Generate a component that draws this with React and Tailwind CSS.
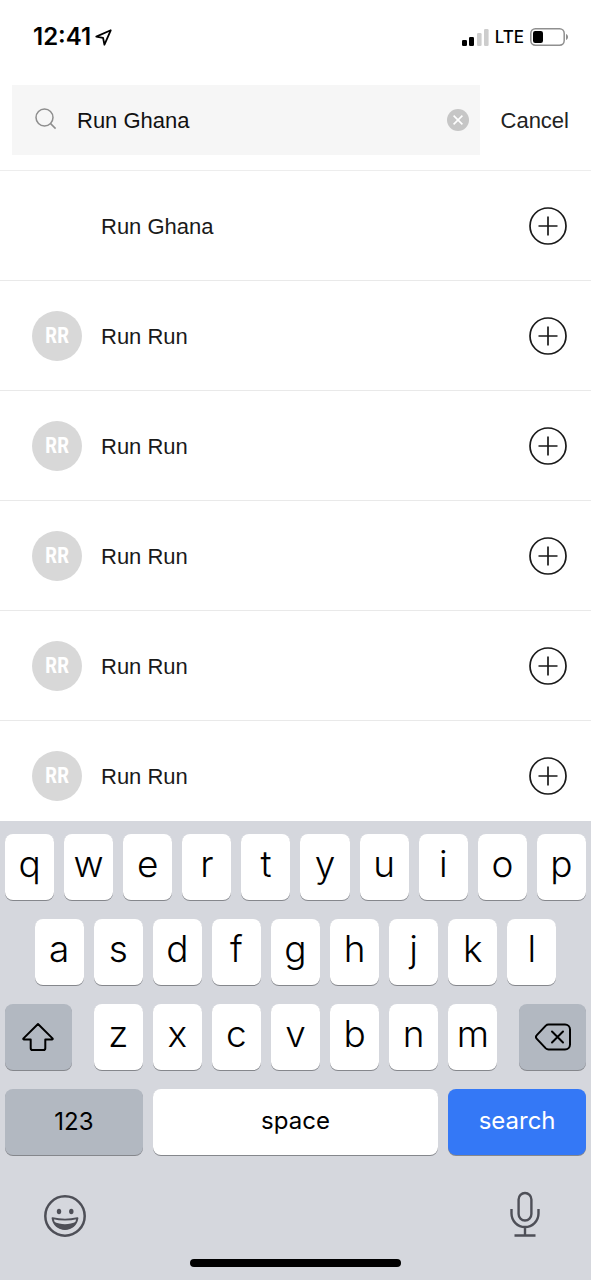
import { useState } from "react";
import clsx from "clsx";

const RESULTS = [
  { id: 1, name: "Run Ghana", initials: null },
  { id: 2, name: "Run Run", initials: "RR" },
  { id: 3, name: "Run Run", initials: "RR" },
  { id: 4, name: "Run Run", initials: "RR" },
  { id: 5, name: "Run Run", initials: "RR" },
  { id: 6, name: "Run Run", initials: "RR" },
];

function StatusBar() {
  return (
    <div className="flex h-[85px] items-start justify-between pt-6 pr-[22px] pl-[33px] font-[Inter,sans-serif] text-black">
      <div className="flex items-center gap-1">
        <span className="text-[24px] leading-[26px] font-semibold">12:41</span>
        <svg className="h-[17px] w-[17px]" viewBox="0 0 16 16" fill="none" stroke="currentColor" strokeWidth="1.7" strokeLinejoin="round">
          <path d="M14.8 1.2 1.2 7.2l6.4 1.2 1.3 6.4z" />
        </svg>
      </div>
      <div className="flex h-[26px] items-center gap-[6px]">
        <svg className="h-[17px] w-[27px]" viewBox="0 0 27 17">
          <rect x="0" y="11" width="5" height="6" rx="1.2" fill="#000" />
          <rect x="7" y="8" width="5" height="9" rx="1.2" fill="#000" />
          <rect x="15" y="4" width="4.6" height="13" rx="1.2" fill="#cdcdcd" />
          <rect x="22" y="0" width="4.6" height="17" rx="1.2" fill="#cdcdcd" />
        </svg>
        <span className="text-[17px] leading-[26px] font-medium">LTE</span>
        <svg className="h-[18px] w-[39px]" viewBox="0 0 39 18">
          <rect x="0.8" y="0.8" width="33.4" height="16.4" rx="4.6" fill="none" stroke="#8f8f8f" strokeWidth="1.5" />
          <rect x="3" y="3" width="10" height="12" rx="2.2" fill="#000" />
          <path d="M36 6v6c1.4-.5 2-1.6 2-3s-.6-2.5-2-3z" fill="#8f8f8f" />
        </svg>
      </div>
    </div>
  );
}

function SearchHeader({ query, onChange }) {
  return (
    <form
      className="flex items-center gap-[21px] border-b border-[#ededed] pr-[22px] pb-[15px] pl-3"
      onSubmit={(e) => e.preventDefault()}
    >
      <div className="flex h-[70px] min-w-0 flex-1 items-center bg-[#f6f6f6] pr-[11px] pl-[23px]">
        <svg className="mb-0.5 h-[22px] w-[22px] shrink-0" viewBox="0 0 22 22" fill="none" stroke="#8e8e8e" strokeWidth="1.5">
          <circle cx="9.5" cy="9.5" r="8.5" />
          <path d="m15.6 15.6 5 5" />
        </svg>
        <input
          type="text"
          aria-label="Search"
          value={query}
          onChange={(e) => onChange(e.target.value)}
          className="ml-5 min-w-0 flex-1 bg-transparent pt-0.5 text-[22px] leading-7 text-[#111] outline-none"
        />
        <button type="button" aria-label="Clear" onClick={() => onChange("")} className="shrink-0">
          <svg className="h-[22px] w-[22px]" viewBox="0 0 22 22">
            <circle cx="11" cy="11" r="11" fill="#c6c6c6" />
            <path d="m6.6 6.6 8.8 8.8m0-8.8-8.8 8.8" stroke="#fff" strokeWidth="1.6" />
          </svg>
        </button>
      </div>
      <button type="button" className="pt-0.5 text-[22px] leading-7 text-[#222]">
        Cancel
      </button>
    </form>
  );
}

function ResultRow({ person }) {
  return (
    <li className="flex h-[110px] items-center border-b border-[#e9e9e9] pr-6 pl-8">
      <div
        className={clsx(
          "flex h-[50px] w-[50px] shrink-0 items-center justify-center rounded-full text-white",
          person.initials && "bg-[#d8d8d8]"
        )}
      >
        <span className="font-['Liberation_Sans_Narrow','Roboto_Condensed',Roboto,sans-serif] text-[22px] leading-6 font-semibold">
          {person.initials}
        </span>
      </div>
      <p className="ml-[19px] min-w-0 flex-1 truncate pt-0.5 text-[22px] leading-7">{person.name}</p>
      <button type="button" aria-label={`Add ${person.name}`} className="shrink-0">
        <svg className="h-[38px] w-[38px]" viewBox="0 0 38 38" fill="none" stroke="#1a1a1a" strokeWidth="1.7">
          <circle cx="19" cy="19" r="18" />
          <path d="M19 9.5v19M9.5 19h19" />
        </svg>
      </button>
    </li>
  );
}

function Key({ className, children, ...props }) {
  return (
    <button
      type="button"
      className={clsx(
        "flex h-[66px] items-center justify-center rounded-lg shadow-[0_1px_0_#85878c]",
        className
      )}
      {...props}
    >
      {children}
    </button>
  );
}

function LetterKey({ letter, className, onPress }) {
  return (
    <Key
      className={clsx("col-span-2 bg-white pb-[7px] text-[37px] leading-10 font-light", className)}
      onClick={() => onPress(letter)}
    >
      {letter}
    </Key>
  );
}

function Keyboard({ onPress, onDelete }) {
  return (
    <div className="flex h-[459px] shrink-0 flex-col bg-[#d5d7dd] px-[5px] pt-[13px] font-[Inter,sans-serif] text-black">
      <div className="grid grid-cols-20 gap-x-[10px] gap-y-[19px]">
        {"qwertyuiop".split("").map((l) => (
          <LetterKey key={l} letter={l} onPress={onPress} />
        ))}

        {"asdfghjkl".split("").map((l) => (
          <LetterKey key={l} letter={l} onPress={onPress} className={l === "a" && "col-start-2"} />
        ))}

        <Key aria-label="Shift" className="col-span-3 col-start-1 mr-3 bg-[#b2b8c1]">
          <svg className="h-[30px] w-8" viewBox="0 0 32 30" fill="none" stroke="#000" strokeWidth="2" strokeLinejoin="round">
            <path d="M16 2 1.5 16.4c-.5.6-.2 1.1.5 1.1h6.7v8.7c0 1.200.6 1.800 1.800 1.800h11c1.200 0 1.800-.6 1.800-1.800v-8.700H30c.7 0 1-.5.5-1.100z" />
          </svg>
        </Key>
        {"zxcvbnm".split("").map((l) => (
          <LetterKey key={l} letter={l} onPress={onPress} />
        ))}
        <Key aria-label="Delete" className="col-span-3 ml-3 bg-[#b2b8c1]" onClick={onDelete}>
          <svg className="h-7 w-9" viewBox="0 0 36 28" fill="none" stroke="#000" strokeWidth="2" strokeLinecap="round" strokeLinejoin="round">
            <path d="M13.5 1.5H30a5 5 0 0 1 5 5v15a5 5 0 0 1-5 5H13.5a4 4 0 0 1-2.7-1.1L1.6 15.6a2.2 2.2 0 0 1 0-3.200l9.200-9.800a4 4 0 0 1 2.700-1.100z" />
            <path d="m17 8.5 11 11m0-11-11 11" />
          </svg>
        </Key>

        <Key className="col-span-5 bg-[#b2b8c1] text-[24px] leading-7">123</Key>
        <Key className="col-span-10 bg-white pb-0.5 text-[24px] leading-7" onClick={() => onPress(" ")}>
          space
        </Key>
        <Key className="col-span-5 bg-[#3478f6] pb-0.5 text-[24px] leading-7 text-white">search</Key>
      </div>

      <div className="mt-9 flex items-end justify-between pr-[46px] pl-[39px]">
        <button type="button" aria-label="Emoji">
          <svg className="h-[42px] w-[42px]" viewBox="0 0 42 42" fill="none" stroke="#4e4f57">
            <circle cx="21" cy="21" r="19.7" strokeWidth="2.5" />
            <ellipse cx="15" cy="16.5" rx="2.2" ry="2.7" fill="#4e4f57" stroke="none" />
            <ellipse cx="27.3" cy="16.5" rx="2.2" ry="2.7" fill="#4e4f57" stroke="none" />
            <path d="M8.5 23.200c8 1.900 17 1.900 25 0-1 6.600-6 10.800-12.500 10.800S9.500 29.800 8.500 23.200z" strokeWidth="1.8" strokeLinejoin="round" />
            <path d="M9.5 26.500c7.500 3.700 15.500 3.700 23 0-1.700 5-6 7.800-11.500 7.800s-9.800-2.800-11.500-7.800z" fill="#4e4f57" stroke="none" />
          </svg>
        </button>
        <button type="button" aria-label="Dictate">
          <svg className="h-[46px] w-[30px]" viewBox="0 0 30 46" fill="none" stroke="#4e4f57" strokeWidth="2.4">
            <rect x="8.6" y="2" width="12.8" height="27.5" rx="6.4" />
            <path d="M1.5 18v4.5a13.5 13.5 0 0 0 27 0V18M15 36v8M4.500 44.500h21" />
          </svg>
        </button>
      </div>

      <div className="mt-auto mb-[13px] h-2 w-[211px] self-center rounded-full bg-black" />
    </div>
  );
}

export default function App() {
  const [query, setQuery] = useState("Run Ghana");

  return (
    <div className="flex h-screen flex-col overflow-hidden bg-white font-['Liberation_Sans',Arial,sans-serif] text-[#1a1a1a]">
      <StatusBar />
      <SearchHeader query={query} onChange={setQuery} />
      <ul className="min-h-0 flex-1 overflow-hidden">
        {RESULTS.map((person) => (
          <ResultRow key={person.id} person={person} />
        ))}
      </ul>
      <Keyboard
        onPress={(char) => setQuery((q) => q + char)}
        onDelete={() => setQuery((q) => q.slice(0, -1))}
      />
    </div>
  );
}
